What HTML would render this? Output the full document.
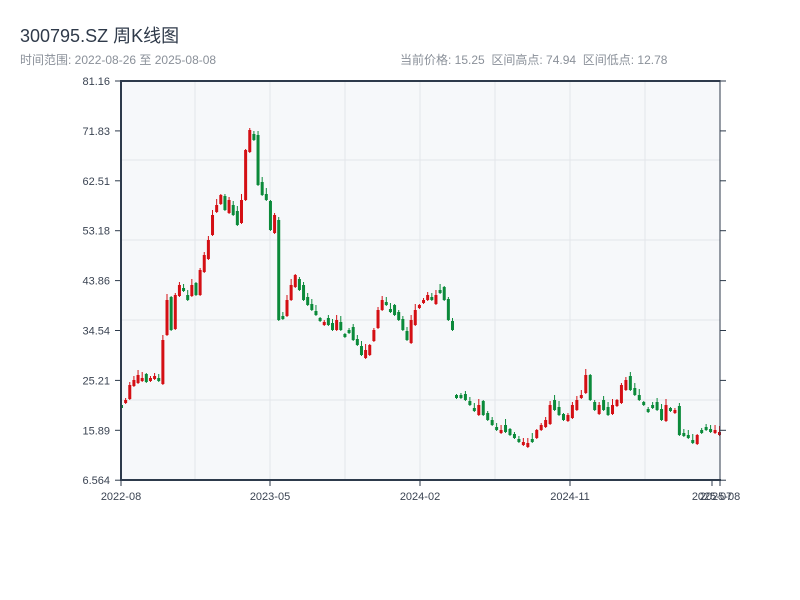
<!DOCTYPE html>
<html><head><meta charset="utf-8"><style>
body{margin:0;background:#fff;width:800px;height:600px;overflow:hidden;font-family:"Liberation Sans","Noto Sans CJK SC",sans-serif}
.t{position:absolute;left:20px;top:22px;font-size:18px;color:#2f3a4a}
.s{position:absolute;top:51px;font-size:12px;color:#8a9099}
</style></head><body>
<div class="t">300795.SZ 周K线图</div>
<div class="s" style="left:20px">时间范围: 2022-08-26 至 2025-08-08</div>
<div class="s" style="left:400px">当前价格: 15.25 &nbsp;区间高点: 74.94 &nbsp;区间低点: 12.78</div>
<svg id="c" width="800" height="600" style="position:absolute;left:0;top:0" font-family="Liberation Sans, sans-serif" font-size="11" fill="#3a4352"></svg>
<script>
var s='<rect x="121" y="81" width="599" height="399" fill="#f6f8fa"/>';
[195,270,345,420,495,570,645].forEach(function(x){s+='<line x1="'+x+'" y1="81" x2="'+x+'" y2="480" stroke="#e3e6ea"/>';});
[160,240,320,400].forEach(function(y){s+='<line x1="121" y1="'+y+'" x2="720" y2="'+y+'" stroke="#e3e6ea"/>';});
var labs=["81.16","71.83","62.51","53.18","43.86","34.54","25.21","15.89","6.564"];
labs.forEach(function(l,i){var y=81+i*49.9;s+='<line x1="115" y1="'+y+'" x2="121" y2="'+y+'" stroke="#2d3a4b"/><line x1="720" y1="'+y+'" x2="726" y2="'+y+'" stroke="#2d3a4b"/><text x="110" y="'+(y+4)+'" text-anchor="end">'+l+'</text>';});
var seg1=[405,400,385,380,375,378,382,378,376,380,340,300,330,295,285,290,300,285,295,270,255,240,215,205,195,210,200,215,225,200,150,130,140,185,195,200,230,215,320,318,300,285,275,290,300,305,310,315,320,322,325,330,320,330,335,330,340,345,355,350,345,330,310,300,305,310,315,320,330,340,320,310,305,300,295,300,295,290,300,320,330];
var seg2=[398,395,400,405,410,405,415,420,425,428,430,432,435,438,440,442,443,440,430,425,420,405,410,415,420,415,405,400,395,375,400,410,405,410,415,405,400,385,380,390,395,400,405,410,405,410,420,405,408,410,435,435,438,440,435,430,430,432,430,432];
function draw(a,x0,x1,o){var d=(x1-x0)/(a.length-1),p=o;a.forEach(function(c,i){var x=x0+i*d,j=((i*13)%11)-5,op=p+j,up=c<op,col=up?'#d40f14':'#0b8a3a',t=Math.min(c,op),b=Math.max(c,op);if(b-t<3)b=t+3;var w=((i*7)%6)+1;s+='<line x1="'+(x+1.5)+'" y1="'+(t-w)+'" x2="'+(x+1.5)+'" y2="'+(b+((i*5)%5)+1)+'" stroke="'+col+'"/><rect x="'+x+'" y="'+t+'" width="3" height="'+(b-t)+'" fill="'+col+'"/>';p=c;});}
draw(seg1,120,451,410);draw(seg2,455,718,400);
s+='<line x1="121" y1="81" x2="720" y2="81" stroke="#2d3a4b" stroke-width="2"/><line x1="121" y1="80" x2="121" y2="481" stroke="#2d3a4b" stroke-width="2"/><line x1="720" y1="80" x2="720" y2="481" stroke="#2d3a4b"/><line x1="120" y1="480" x2="721" y2="480" stroke="#2d3a4b" stroke-width="2"/>';
[[121,"2022-08"],[270,"2023-05"],[420,"2024-02"],[570,"2024-11"],[712,"2025-07"],[720,"2025-08"]].forEach(function(t){s+='<line x1="'+t[0]+'" y1="480" x2="'+t[0]+'" y2="486" stroke="#2d3a4b"/><text x="'+t[0]+'" y="500" text-anchor="middle">'+t[1]+'</text>';});
document.getElementById('c').innerHTML=s;
</script>
</body></html>
